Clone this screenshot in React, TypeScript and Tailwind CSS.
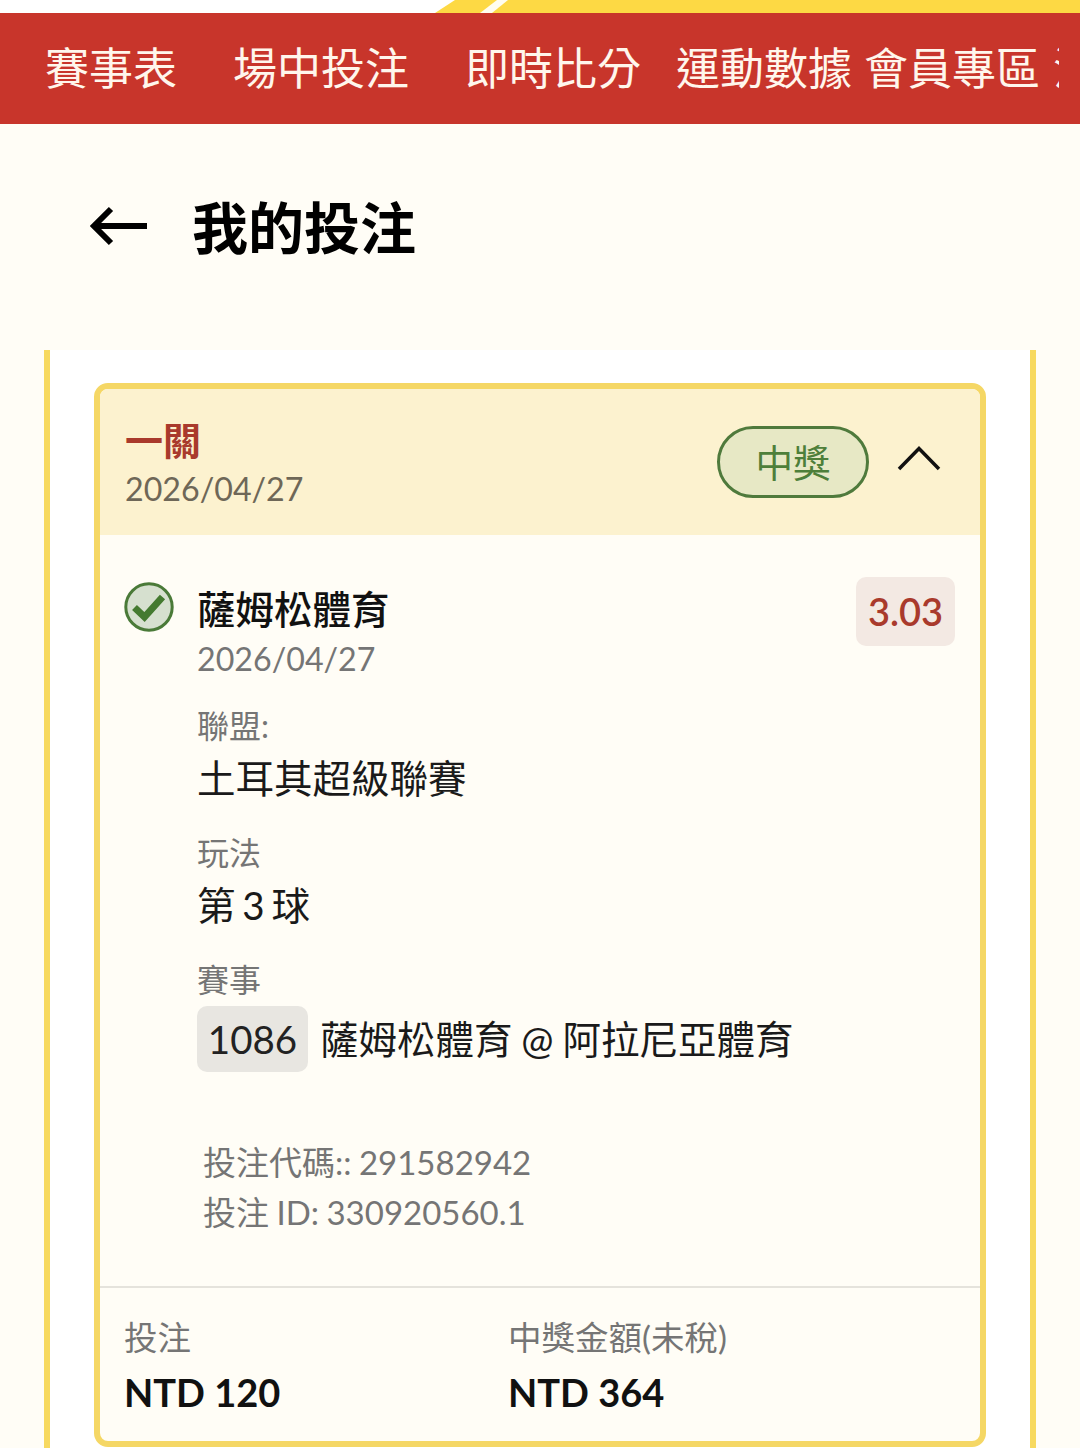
import React from 'react';

const navItems = [
  { label: '賽事表', className: 'ml-[45px]' },
  { label: '場中投注', className: 'ml-[56px]' },
  { label: '即時比分', className: 'ml-[56px]' },
  { label: '運動數據', className: 'ml-[35px]' },
  { label: '會員專區', className: 'ml-[12px]' },
  { label: '注單', className: 'ml-[13px]' },
];

const CheckIcon = () => (
  <svg width="50" height="50" viewBox="0 0 50 50" className="shrink-0">
    <circle cx="25" cy="25" r="23.2" fill="#d6e0cf" stroke="#4a7a38" strokeWidth="3" />
    <path d="M10.5 25.5 L20.5 35 L38.5 15" fill="none" stroke="#447a30" strokeWidth="7" />
  </svg>
);

const Field = ({ label, value }: { label: string; value: string }) => (
  <div className="mb-[22px]">
    <div className="text-[32px] leading-[48px] text-[#757575]">{label}</div>
    <div className="-mt-[1px] text-[38.5px] leading-[58px] text-[#1a1a1a] [word-spacing:-3px]">{value}</div>
  </div>
);

export default function App() {
  return (
    <div className="h-[1448px] w-[1080px] overflow-hidden bg-[#fffdf6] font-['Lato','Noto_Sans_CJK_TC',sans-serif]">
      <svg width="1080" height="13" viewBox="0 0 1080 13" className="block">
        <rect width="1080" height="13" fill="#ffffff" />
        <polygon points="455,0 1080,0 1080,13 435,13" fill="#fdd944" />
        <polygon points="497,0 508,0 492,13 480,13" fill="#fffdf0" />
      </svg>

      <nav className="h-[111px] bg-[#c8352b]">
        <div className="flex h-full w-[1059px] items-center overflow-hidden whitespace-nowrap pb-[2px] text-[44px] text-[#fff6ec]">
          {navItems.map((item) => (
            <span key={item.label} className={`shrink-0 ${item.className}`}>
              {item.label}
            </span>
          ))}
        </div>
      </nav>

      <div className="flex h-[215px] items-center pb-[8px] pl-[88px]">
        <svg width="60" height="40" viewBox="0 0 60 40" className="mt-[-4px] shrink-0">
          <path d="M59 20 H6 M23 3 L6 20 L23 37" fill="none" stroke="#000000" strokeWidth="6" />
        </svg>
        <h1 className="ml-[44px] text-[56px] font-bold leading-none text-black">我的投注</h1>
      </div>

      <div className="mx-[44px] mt-[11px] border-x-[6px] border-[#f7d95f] bg-white pt-[33px]">
        <div className="mx-[44px] overflow-hidden rounded-[14px] border-[6px] border-[#f5d765] bg-[#fffdf6]">
          <div className="flex h-[146px] items-center justify-between bg-[#fcf2cf] pl-[25px] pr-[38px]">
            <div className="mt-[5px]">
              <div className="text-[38px] font-bold leading-[48px] text-[#a93a2c]">一關</div>
              <div className="mt-[1px] text-[32.2px] leading-[48px] text-[#6e6757]">2026/04/27</div>
            </div>
            <div className="flex items-center">
              <span className="flex h-[72px] w-[152px] items-center justify-center rounded-full border-[3px] border-[#4f7a3c] bg-[#e7e8c5] pt-[2px] text-[37.5px] text-[#4e7f3a]">
                中獎
              </span>
              <svg width="46" height="28" viewBox="0 0 46 28" className="mb-[8px] ml-[27px] shrink-0">
                <path d="M3 25 L23 4.5 L43 25" fill="none" stroke="#111111" strokeWidth="3.5" />
              </svg>
            </div>
          </div>

          <div className="h-[751px] pl-[24px] pr-[25px] pt-[42px]">
            <div className="flex items-start">
              <div className="mt-[5px]">
                <CheckIcon />
              </div>
              <div className="ml-[23px] min-w-0 flex-1">
                <div className="flex items-start justify-between">
                  <div className="pt-[7px]">
                    <div className="text-[38.5px] font-medium leading-[50px] text-[#111111]">薩姆松體育</div>
                    <div className="mt-[1px] text-[32.2px] leading-[48px] text-[#757575]">2026/04/27</div>
                  </div>
                  <span className="flex h-[69px] w-[99px] items-center justify-center rounded-[10px] bg-[#f3e9e3] text-[38px] font-semibold text-[#a93a2c]">
                    3.03
                  </span>
                </div>
                <div className="mt-[19px]">
                  <Field label="聯盟:" value="土耳其超級聯賽" />
                  <Field label="玩法" value="第 3 球" />
                  <div className="text-[32px] leading-[48px] text-[#757575]">賽事</div>
                  <div className="mt-[2px] flex items-center">
                    <span className="flex h-[66px] w-[111px] items-center justify-center rounded-[10px] bg-[#e8e6e1] pt-[2px] text-[38.5px] text-[#222222]">
                      1086
                    </span>
                    <span className="ml-[12px] pt-[2px] text-[38.5px] text-[#1a1a1a] [word-spacing:-1px]">
                      薩姆松體育 @ 阿拉尼亞體育
                    </span>
                  </div>
                </div>
                <div className="ml-[6px] mt-[65px] text-[33px] leading-[50px] text-[#757575] [word-spacing:-1px]">
                  <div>投注代碼:: 291582942</div>
                  <div>投注 ID: 330920560.1</div>
                </div>
              </div>
            </div>
          </div>

          <div className="flex h-[155px] border-t-[2px] border-[#e5e3dc] pl-[24px] pt-[24px]">
            <div className="w-[384px]">
              <div className="text-[33.5px] leading-[50px] text-[#757575]">投注</div>
              <div className="mt-[5px] text-[38px] font-bold leading-[50px] text-[#111111]">NTD 120</div>
            </div>
            <div>
              <div className="text-[33.5px] leading-[50px] text-[#757575]">中獎金額(未稅)</div>
              <div className="mt-[5px] text-[38px] font-bold leading-[50px] text-[#111111]">NTD 364</div>
            </div>
          </div>
        </div>
        <div className="h-[60px]" />
      </div>
    </div>
  );
}
